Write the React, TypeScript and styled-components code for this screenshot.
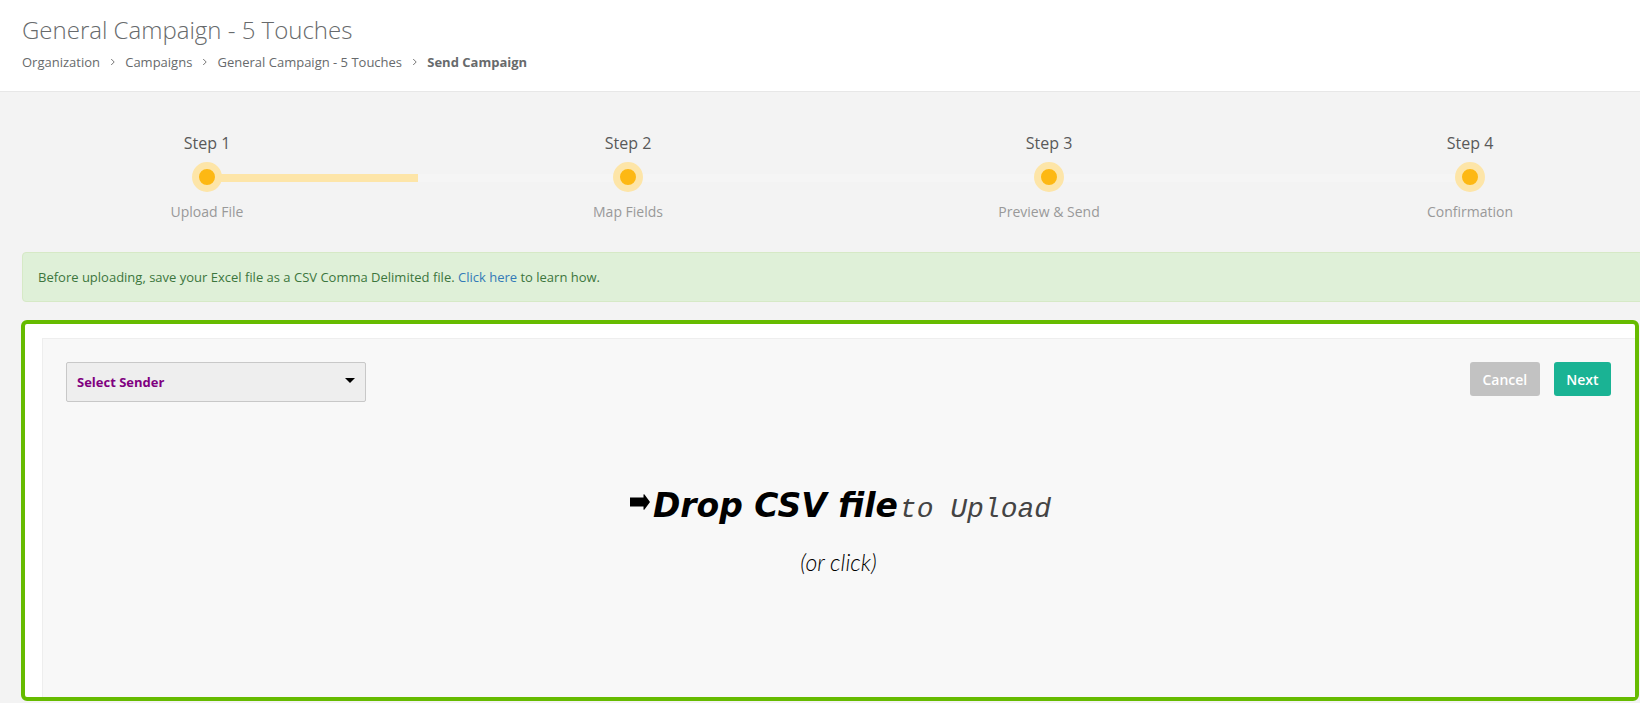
import React from "react";
import styled, { createGlobalStyle } from "styled-components";

const GlobalStyle = createGlobalStyle`
  html, body {
    margin: 0;
    padding: 0;
    height: 703px;
    overflow: hidden;
    background: #f3f3f3;
    font-family: "Open Sans", "Liberation Sans", sans-serif;
  }
`;

const steps = [
  { title: "Step 1", caption: "Upload File", done: true },
  { title: "Step 2", caption: "Map Fields", done: false },
  { title: "Step 3", caption: "Preview & Send", done: false },
  { title: "Step 4", caption: "Confirmation", done: false },
];

const crumbs = ["Organization", "Campaigns", "General Campaign - 5 Touches"];

export default function App() {
  return (
    <Page>
      <GlobalStyle />
      <Header>
        <Title>General Campaign - 5 Touches</Title>
        <Breadcrumb>
          {crumbs.map((c) => (
            <React.Fragment key={c}>
              <Crumb>{c}</Crumb>
              <Chevron viewBox="0 0 6 8">
                <path d="M1.2 1l3 3-3 3" fill="none" stroke="#777" strokeWidth="1" />
              </Chevron>
            </React.Fragment>
          ))}
          <CurrentCrumb>Send Campaign</CurrentCrumb>
        </Breadcrumb>
      </Header>

      <Wizard>
        {steps.map((s, i) => (
          <Step key={s.title}>
            <StepTitle>{s.title}</StepTitle>
            <Track>
              <TrackLine $side="left" $hidden={i === 0} />
              <TrackLine $side="right" $hidden={i === steps.length - 1} $done={s.done} />
              <Dot />
            </Track>
            <StepCaption>{s.caption}</StepCaption>
          </Step>
        ))}
      </Wizard>

      <Alert>
        Before uploading, save your Excel file as a CSV Comma Delimited file.{" "}
        <AlertLink href="#">Click here</AlertLink> to learn how.
      </Alert>

      <DropFrame>
        <Panel>
          <Toolbar>
            <SenderSelect>
              <SenderLabel>Select Sender</SenderLabel>
              <Caret />
            </SenderSelect>
            <Actions>
              <ActionButton $bg="#c2c2c2">Cancel</ActionButton>
              <ActionButton $bg="#1ab394">Next</ActionButton>
            </Actions>
          </Toolbar>
          <DropMessage>
            <DropHeading>
              <DropArrow viewBox="0 0 20 16">
                <path d="M0 3.5h13.5V0.5q0.5-0.5 1 0L20 8l-5.5 7.5q-0.5 0.5-1 0v-3H0z" fill="#000" />
              </DropArrow>
              <DropStrong>Drop CSV file</DropStrong>
              <DropRest>to Upload</DropRest>
            </DropHeading>
            <DropHint>(or click)</DropHint>
          </DropMessage>
        </Panel>
      </DropFrame>
    </Page>
  );
}

const Page = styled.div`
  width: 1640px;
  height: 703px;
  overflow: hidden;
  background: #f3f3f3;
`;

const Header = styled.header`
  height: 92px;
  box-sizing: border-box;
  padding: 15px 22px 0;
  background: #fff;
  border-bottom: 1px solid #e7e7e7;
`;

const Title = styled.h2`
  margin: 0;
  font-size: 24px;
  line-height: 30px;
  font-weight: 300;
  color: #676a6c;
`;

const Breadcrumb = styled.div`
  display: flex;
  align-items: center;
  margin-top: 8px;
  font-size: 13px;
  line-height: 18px;
  color: #676a6c;
`;

const Crumb = styled.span``;

const CurrentCrumb = styled.span`
  font-weight: 700;
`;

const Chevron = styled.svg`
  width: 6px;
  height: 8px;
  margin: 0 9.6px;
`;

const Wizard = styled.div`
  display: grid;
  grid-template-columns: repeat(4, 421px);
  width: 1684px;
  margin: 0 0 0 -3.5px;
  padding-top: 40px;
`;

const Step = styled.div`
  display: flex;
  flex-direction: column;
  align-items: center;
`;

const StepTitle = styled.div`
  font-size: 16px;
  line-height: 22px;
  color: #595959;
`;

const Track = styled.div`
  position: relative;
  width: 100%;
  height: 30px;
  margin-top: 8px;
  display: flex;
  align-items: center;
  justify-content: center;
`;

const TrackLine = styled.div<{ $side: "left" | "right"; $hidden?: boolean; $done?: boolean }>`
  position: absolute;
  top: 12px;
  width: 50%;
  height: 8px;
  ${({ $side }) => ($side === "left" ? "left: 0;" : "right: 0;")}
  display: ${({ $hidden }) => ($hidden ? "none" : "block")};
  background: ${({ $done }) => ($done ? "#fde5a8" : "#f5f5f5")};
`;

const Dot = styled.div`
  position: relative;
  width: 16px;
  height: 16px;
  border-radius: 50%;
  background: #fdb813;
  border: 7px solid #fde5a8;
`;

const StepCaption = styled.div`
  margin-top: 10px;
  font-size: 14px;
  line-height: 20px;
  color: #999;
`;

const Alert = styled.div`
  box-sizing: border-box;
  width: 1660px;
  height: 50px;
  margin: 30px 0 0 22px;
  padding: 0 15px;
  display: block;
  line-height: 48px;
  font-size: 13px;
  color: #3c763d;
  background: #dff0d8;
  border: 1px solid #d6e9c6;
  border-radius: 4px;
`;

const AlertLink = styled.a`
  color: #337ab7;
  text-decoration: none;
`;

const DropFrame = styled.section`
  box-sizing: border-box;
  width: 1618px;
  height: 381px;
  margin: 18px 0 0 21px;
  padding: 14px 0 0 17px;
  background: #fff;
  border: 4px solid #66bb00;
  border-radius: 6px;
`;

const Panel = styled.div`
  box-sizing: border-box;
  height: 359px;
  padding: 23px 24px 0 23px;
  background: #f8f8f8;
  border: 1px solid #eeeeee;
  border-right: 0;
  border-bottom: 0;
`;

const Toolbar = styled.div`
  display: flex;
  justify-content: space-between;
  align-items: flex-start;
`;

const SenderSelect = styled.div`
  box-sizing: border-box;
  width: 300px;
  height: 40px;
  padding: 0 10px;
  display: flex;
  align-items: center;
  justify-content: space-between;
  background: #eeeeee;
  border: 1px solid #c8c8c8;
  border-radius: 2px;
`;

const SenderLabel = styled.span`
  font-size: 13px;
  font-weight: 700;
  color: #800080;
`;

const Caret = styled.span`
  width: 0;
  height: 0;
  margin-bottom: 3px;
  border-left: 5px solid transparent;
  border-right: 5px solid transparent;
  border-top: 5px solid #000;
`;

const Actions = styled.div`
  display: flex;
  gap: 14px;
`;

const ActionButton = styled.button<{ $bg: string }>`
  height: 34px;
  padding: 0 12.5px;
  border: 0;
  border-radius: 3px;
  font-family: "Open Sans", sans-serif;
  font-size: 14px;
  font-weight: 600;
  color: #fff;
  background: ${({ $bg }) => $bg};
`;

const DropMessage = styled.div`
  margin-top: 80px;
  text-align: center;
`;

const DropHeading = styled.div`
  display: flex;
  justify-content: center;
  align-items: baseline;
  padding-left: 4px;
  color: #000;
  line-height: 48px;
`;

const DropArrow = styled.svg`
  width: 20px;
  height: 16px;
  margin-right: 3px;
  transform: translateY(-7px);
`;

const DropStrong = styled.span`
  font-family: "DejaVu Sans", sans-serif;
  font-size: 33px;
  font-weight: 700;
  font-style: italic;
`;

const DropRest = styled.span`
  margin-left: 2px;
  font-family: "Liberation Mono", monospace;
  font-size: 28px;
  font-style: italic;
  color: #444;
`;

const DropHint = styled.div`
  margin-top: 15px;
  font-family: "Lato", sans-serif;
  font-size: 23px;
  font-weight: 300;
  line-height: 26px;
  font-style: italic;
  color: #000;
`;
